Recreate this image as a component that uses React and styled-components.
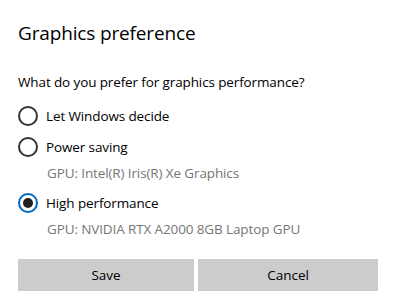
import React, { useState } from 'react';
import styled, { createGlobalStyle } from 'styled-components';

const GlobalStyle = createGlobalStyle`
  html, body {
    margin: 0;
    padding: 0;
    background: #ffffff;
  }
  body {
    font-family: "Open Sans", "Noto Sans", "Liberation Sans", sans-serif;
    color: #000000;
  }
`;

const Dialog = styled.div`
  width: 394px;
  height: 303px;
  box-sizing: border-box;
  padding: 20px 16px 0 18px;
  background: #ffffff;
`;

const Title = styled.h1`
  margin: 0;
  font-size: 19px;
  font-weight: 400;
  line-height: 26px;
  letter-spacing: -0.15px;
`;

const Question = styled.p`
  margin: 27px 0 0;
  font-size: 13.5px;
  line-height: 18px;
  letter-spacing: -0.12px;
`;

const Options = styled.div`
  display: flex;
  flex-direction: column;
  margin-top: 15px;
`;

const Option = styled.label`
  display: flex;
  flex-direction: column;
  margin-bottom: ${(p) => p.$gap}px;
  cursor: pointer;
`;

const OptionRow = styled.div`
  display: flex;
  align-items: center;
  gap: 8px;
  height: 20px;
`;

const Radio = styled.span`
  width: 20px;
  height: 20px;
  box-sizing: border-box;
  border-radius: 50%;
  border: 2px solid ${(p) => (p.$checked ? '#0067c0' : '#333333')};
  display: flex;
  align-items: center;
  justify-content: center;
  flex-shrink: 0;

  &::after {
    content: '';
    width: 10px;
    height: 10px;
    border-radius: 50%;
    background: #1f1f1f;
    display: ${(p) => (p.$checked ? 'block' : 'none')};
  }
`;

const OptionLabel = styled.span`
  font-size: 13.5px;
  line-height: 18px;
  letter-spacing: -0.12px;
`;

const Detail = styled.span`
  margin: 7px 0 0 29px;
  font-size: 13.5px;
  line-height: 18px;
  letter-spacing: -0.12px;
  color: #767676;
`;

const Buttons = styled.div`
  display: grid;
  grid-template-columns: 176px 180px;
  gap: 4px;
  margin-top: 21px;
`;

const Button = styled.button`
  height: 32px;
  border: none;
  background: #cccccc;
  color: #000000;
  font-family: inherit;
  font-size: 13.5px;
  padding: 0;
  cursor: pointer;
`;

const choices = [
  { id: 'auto', label: 'Let Windows decide', gap: 11 },
  { id: 'power', label: 'Power saving', detail: 'GPU: Intel(R) Iris(R) Xe Graphics', gap: 11 },
  { id: 'high', label: 'High performance', detail: 'GPU: NVIDIA RTX A2000 8GB Laptop GPU', gap: 0 },
];

export default function App() {
  const [pick, setPick] = useState('high');

  return (
    <>
      <GlobalStyle />
      <Dialog>
        <Title>Graphics preference</Title>
        <Question>What do you prefer for graphics performance?</Question>
        <Options>
          {choices.map((c) => (
            <Option key={c.id} $gap={c.gap} onClick={() => setPick(c.id)}>
              <OptionRow>
                <Radio $checked={pick === c.id} />
                <OptionLabel>{c.label}</OptionLabel>
              </OptionRow>
              {c.detail && <Detail>{c.detail}</Detail>}
            </Option>
          ))}
        </Options>
        <Buttons>
          <Button>Save</Button>
          <Button>Cancel</Button>
        </Buttons>
      </Dialog>
    </>
  );
}
